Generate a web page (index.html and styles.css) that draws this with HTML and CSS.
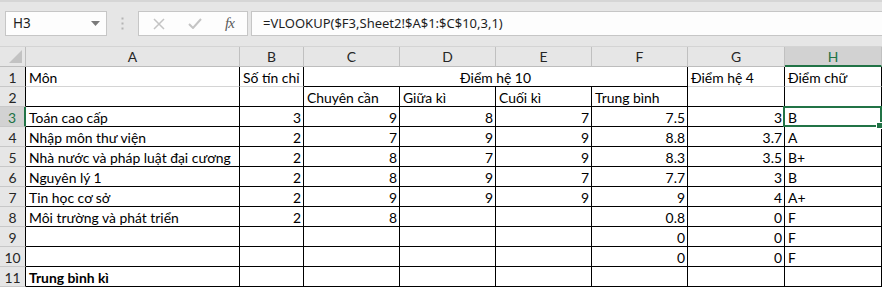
FILE: index.html
```html
<!DOCTYPE html>
<html>
<head>
<meta charset="utf-8">
<link rel="stylesheet" href="styles.css">
</head>
<body>
<div class="toolbar">
  <div class="namebox"><span class="nb-text">H3</span><svg class="nb-arrow" width="9" height="5" viewBox="0 0 9 5"><path d="M0 0H9L4.5 5Z" fill="#7a7a7a"/></svg></div>
  <div class="grip"><svg width="3" height="13" viewBox="0 0 3 13"><rect x="0.5" y="0.5" width="2" height="2" fill="#b4b4b4"/><rect x="0.5" y="5.5" width="2" height="2" fill="#b4b4b4"/><rect x="0.5" y="10.5" width="2" height="2" fill="#b4b4b4"/></svg></div>
  <div class="fbtns">
    <svg class="ic-x" width="12" height="12" viewBox="0 0 12 12"><path d="M1 1L11 11M11 1L1 11" stroke="#c4c4c4" stroke-width="1.5" fill="none"/></svg>
    <svg class="ic-ok" width="14" height="11" viewBox="0 0 14 11"><path d="M1 6L5 10L13 1" stroke="#c4c4c4" stroke-width="2" fill="none"/></svg>
    <span class="fx">fx</span>
  </div>
  <div class="finput">=VLOOKUP($F3,Sheet2!$A$1:$C$10,3,1)</div>
</div>
<div class="sheet">
  <div class="corner"><svg width="13" height="13" viewBox="0 0 13 13"><path d="M13 0V13H0Z" fill="#c2c2c2"/></svg></div>
  <div class="ch">A</div><div class="ch">B</div><div class="ch">C</div><div class="ch">D</div><div class="ch">E</div><div class="ch">F</div><div class="ch">G</div><div class="ch ch-sel">H</div>

  <div class="rh">1</div>
  <div class="c lb">Môn</div><div class="c lb">Số tín chỉ</div><div class="c span4 ctr">Điểm hệ 10</div><div class="c lb">Điểm hệ 4</div><div class="c lb">Điểm chữ</div>

  <div class="rh">2</div>
  <div class="c"></div><div class="c"></div><div class="c">Chuyên cần</div><div class="c">Giữa kì</div><div class="c">Cuối kì</div><div class="c">Trung bình</div><div class="c"></div><div class="c"></div>

  <div class="rh rh-sel">3</div>
  <div class="c">Toán cao cấp</div><div class="c n">3</div><div class="c n">9</div><div class="c n">8</div><div class="c n">7</div><div class="c n">7.5</div><div class="c n">3</div><div class="c sel">B</div>

  <div class="rh">4</div>
  <div class="c">Nhập môn thư viện</div><div class="c n">2</div><div class="c n">7</div><div class="c n">9</div><div class="c n">9</div><div class="c n">8.8</div><div class="c n">3.7</div><div class="c">A</div>

  <div class="rh">5</div>
  <div class="c">Nhà nước và pháp luật đại cương</div><div class="c n">2</div><div class="c n">8</div><div class="c n">7</div><div class="c n">9</div><div class="c n">8.3</div><div class="c n">3.5</div><div class="c">B+</div>

  <div class="rh">6</div>
  <div class="c">Nguyên lý 1</div><div class="c n">2</div><div class="c n">8</div><div class="c n">9</div><div class="c n">7</div><div class="c n">7.7</div><div class="c n">3</div><div class="c">B</div>

  <div class="rh">7</div>
  <div class="c">Tin học cơ sở</div><div class="c n">2</div><div class="c n">9</div><div class="c n">9</div><div class="c n">9</div><div class="c n">9</div><div class="c n">4</div><div class="c">A+</div>

  <div class="rh">8</div>
  <div class="c">Môi trường và phát triển</div><div class="c n">2</div><div class="c n">8</div><div class="c"></div><div class="c"></div><div class="c n">0.8</div><div class="c n">0</div><div class="c">F</div>

  <div class="rh">9</div>
  <div class="c"></div><div class="c"></div><div class="c"></div><div class="c"></div><div class="c"></div><div class="c n">0</div><div class="c n">0</div><div class="c">F</div>

  <div class="rh">10</div>
  <div class="c"></div><div class="c"></div><div class="c"></div><div class="c"></div><div class="c"></div><div class="c n">0</div><div class="c n">0</div><div class="c">F</div>

  <div class="rh">11</div>
  <div class="c bold">Trung bình kì</div><div class="c"></div><div class="c"></div><div class="c"></div><div class="c"></div><div class="c"></div><div class="c"></div><div class="c"></div>
</div>
</body>
</html>
```
FILE: styles.css
```css
html, body {
  margin: 0;
  padding: 0;
  width: 882px;
  height: 287px;
  overflow: hidden;
  background: #ffffff;
}

.toolbar {
  height: 47px;
  box-sizing: border-box;
  background: #e6e6e6;
  border-top: 2px solid #d6d6d6;
  border-bottom: 1px solid #d4d4d4;
  display: flex;
  align-items: flex-start;
  padding: 9px 0 0 5px;
  font-family: "Noto Sans", "Open Sans", sans-serif;
  font-size: 13px;
  color: #1e1e1e;
}

.namebox {
  width: 102px;
  height: 25px;
  box-sizing: border-box;
  background: #fdfdfd;
  border: 1px solid #c6c6c6;
  display: flex;
  align-items: center;
  justify-content: space-between;
  padding: 0 6px 0 7px;
}

.nb-text { line-height: 23px; font-size: 13.5px; }

.grip {
  width: 31px;
  height: 25px;
  display: flex;
  align-items: center;
  justify-content: center;
}

.fbtns {
  width: 110px;
  height: 25px;
  box-sizing: border-box;
  background: #fdfdfd;
  border: 1px solid #c6c6c6;
  display: flex;
  align-items: center;
  padding: 0 0 0 14px;
}

.ic-x { margin-right: 23px; }
.ic-ok { margin-right: 23px; }

.fx {
  font-family: "Liberation Serif", serif;
  font-style: italic;
  font-size: 15px;
  color: #5a5a5a;
  letter-spacing: -1px;
}

.finput {
  flex: 1;
  margin-left: 3px;
  height: 25px;
  box-sizing: border-box;
  background: #fdfdfd;
  border: 1px solid #c6c6c6;
  border-right: none;
  padding-left: 11px;
  line-height: 23px;
  white-space: nowrap;
}

.sheet {
  display: grid;
  grid-template-columns: 26px 214px 64px 96px 96px 96px 96px 97px 97px;
  grid-auto-rows: 20px;
  font-family: "Lato", "Liberation Sans", sans-serif;
  font-size: 13.9px;
  color: #000;
}

.sheet > div {
  box-sizing: border-box;
  height: 20px;
  line-height: 19px;
  white-space: nowrap;
  overflow: visible;
}

.corner {
  background: #e6e6e6;
  border-right: 1px solid #bdbdbd;
  border-bottom: 1px solid #bdbdbd;
  display: flex;
  align-items: flex-end;
  justify-content: flex-end;
  padding: 0 3px 3px 0;
}
.corner svg { display: block; }

.ch {
  background: #e6e6e6;
  border-right: 1px solid #c0c0c0;
  border-bottom: 1px solid #bdbdbd;
  text-align: center;
  color: #262626;
}

.ch-sel {
  background: #d2d2d2;
  color: #217346;
  border-bottom: 2px solid #217346;
}

.rh {
  background: #e6e6e6;
  border-right: 1px solid #000;
  border-bottom: 1px solid #c8c8c8;
  text-align: center;
  color: #262626;
  padding-top: 1px;
}

.rh-sel {
  background: #d2d2d2;
  color: #217346;
  border-right: 2px solid #217346;
}

.c {
  border-right: 1px solid #000;
  border-bottom: 1px solid #000;
  padding: 1px 3px 0 3px;
}

.c.lb { border-bottom-color: #d4d4d4; }

.span4 { grid-column: span 4; }
.ctr { text-align: center; }
.n { text-align: right; padding-right: 2px; }
.bold { font-weight: 700; }

.sel { position: relative; }
.sel::after {
  content: "";
  position: absolute;
  top: -1px;
  left: -2px;
  right: -1px;
  bottom: -1px;
  border: 2px solid #217346;
}
.sel::before {
  content: "";
  position: absolute;
  right: -2px;
  bottom: -3px;
  width: 5px;
  height: 5px;
  background: #217346;
  border: 1px solid #fff;
  z-index: 1;
}
```
